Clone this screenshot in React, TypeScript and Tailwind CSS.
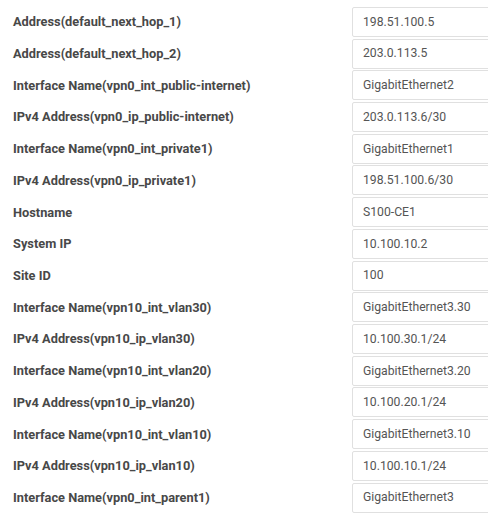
const rows: [string, string][] = [
  ["Address(default_next_hop_1)", "198.51.100.5"],
  ["Address(default_next_hop_2)", "203.0.113.5"],
  ["Interface Name(vpn0_int_public-internet)", "GigabitEthernet2"],
  ["IPv4 Address(vpn0_ip_public-internet)", "203.0.113.6/30"],
  ["Interface Name(vpn0_int_private1)", "GigabitEthernet1"],
  ["IPv4 Address(vpn0_ip_private1)", "198.51.100.6/30"],
  ["Hostname", "S100-CE1"],
  ["System IP", "10.100.10.2"],
  ["Site ID", "100"],
  ["Interface Name(vpn10_int_vlan30)", "GigabitEthernet3.30"],
  ["IPv4 Address(vpn10_ip_vlan30)", "10.100.30.1/24"],
  ["Interface Name(vpn10_int_vlan20)", "GigabitEthernet3.20"],
  ["IPv4 Address(vpn10_ip_vlan20)", "10.100.20.1/24"],
  ["Interface Name(vpn10_int_vlan10)", "GigabitEthernet3.10"],
  ["IPv4 Address(vpn10_ip_vlan10)", "10.100.10.1/24"],
  ["Interface Name(vpn0_int_parent1)", "GigabitEthernet3"],
]

export default function App() {
  return (
    <div className="w-[488px] h-[515px] overflow-hidden bg-white pt-[6px] font-['Roboto',sans-serif]">
      {rows.map(([label, value]) => (
        <div key={label} className="flex items-center h-[31.73px]">
          <label className="w-[352px] shrink-0 pl-[13px] text-[12.8px] font-bold text-[#484848]">{label}</label>
          <div className="h-[30px] w-[160px] shrink-0 flex items-center border border-[#e0e0e0] rounded-[2px] pl-[10px] text-[12.2px] text-[#555]">
            {value}
          </div>
        </div>
      ))}
    </div>
  )
}
